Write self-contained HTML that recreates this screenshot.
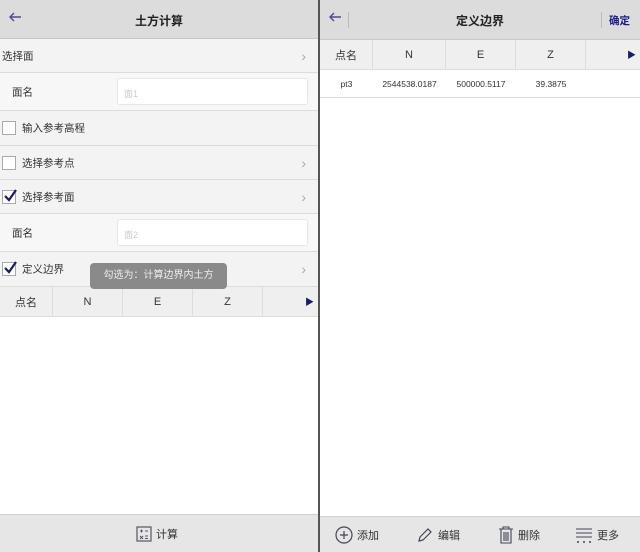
<!DOCTYPE html>
<html><head><meta charset="utf-8"><style>
*{margin:0;padding:0;box-sizing:border-box}
body{width:640px;height:552px;overflow:hidden;background:#fff;font-family:"Liberation Sans","Noto Sans CJK SC",sans-serif;font-size:11px;color:#333;position:relative}
.p{position:absolute;top:0;height:552px}
.L{left:0;width:318px;background:#fff}
.R{left:320px;width:320px;background:#fff}
.div{position:absolute;left:318px;top:0;width:2px;height:552px;background:#555}
.hd{position:absolute;left:0;right:0;top:0;height:39px;background:#dcdcdc;border-bottom:1px solid #c8c8c8}
.hd .t{position:absolute;left:0;right:0;top:12px;text-align:center;font-size:12px;font-weight:bold;color:#222}
.hd .b{position:absolute;left:8px;top:12px}
.row{position:absolute;left:0;right:0;background:#f3f3f3;border-bottom:1px solid #dcdcdc}
.row .tx{position:absolute;left:22px;top:50%;transform:translateY(-50%);font-size:10.5px}
.row .ar{position:absolute;right:12px;top:50%;transform:translateY(-50%);color:#aaa;font-size:14px}
.cb{position:absolute;left:2px;top:50%;transform:translateY(-50%);width:14px;height:14px;border:1px solid #aaa;background:#fff}
.in{position:absolute;left:117px;right:10px;top:5px;bottom:5px;background:#fff;border:1px solid #e6e6e6;border-radius:3px;color:#ccc;font-size:9px;padding:8px 6px}
.th{position:absolute;background:#efefef;height:30px;border-bottom:1px solid #ddd}
.th span,.tr span{position:absolute;top:0;height:100%;text-align:center;display:flex;align-items:center;justify-content:center;border-right:1px solid #ddd}
.ft{position:absolute;left:0;right:0;bottom:0;background:#e6e6e6;border-top:1px solid #d0d0d0}
.ft .it{position:absolute;top:0;height:100%;display:flex;align-items:center;gap:4px;font-size:11px}
</style></head><body>
<svg width="0" height="0" style="position:absolute"><defs>
<symbol id="back" viewBox="0 0 14 10"><path d="M13 5H2M6 1L2 5l4 4" fill="none" stroke="#4a4a9a" stroke-width="1.4"/></symbol>
<symbol id="chk" viewBox="0 0 14 14"><path d="M2 7l4 4 7-10" fill="none" stroke="#1a1a6a" stroke-width="2.2"/></symbol>
</defs></svg>
<div class="p L">
 <div class="hd"><svg class="b" width="14" height="10"><use href="#back"/></svg><div class="t">土方计算</div></div>
 <div class="row" style="top:39px;height:34px"><span class="tx" style="left:2px">选择面</span><span class="ar">›</span></div>
 <div class="row" style="top:73px;height:38px;background:#f7f7f7"><span class="tx" style="left:12px">面名</span><div class="in">面1</div></div>
 <div class="row" style="top:111px;height:35px"><div class="cb"></div><span class="tx">输入参考高程</span></div>
 <div class="row" style="top:146px;height:34px"><div class="cb"></div><span class="tx">选择参考点</span><span class="ar">›</span></div>
 <div class="row" style="top:180px;height:34px"><div class="cb"><svg width="14" height="14" style="position:absolute;left:0;top:-2px"><use href="#chk"/></svg></div><span class="tx">选择参考面</span><span class="ar">›</span></div>
 <div class="row" style="top:214px;height:38px;background:#f7f7f7"><span class="tx" style="left:12px">面名</span><div class="in">面2</div></div>
 <div class="row" style="top:252px;height:35px"><div class="cb"><svg width="14" height="14" style="position:absolute;left:0;top:-2px"><use href="#chk"/></svg></div><span class="tx">定义边界</span><span class="ar">›</span></div>
 <div style="position:absolute;left:90px;top:263px;width:137px;height:26px;background:#8a8a8a;border-radius:4px;color:#eee;font-size:10px;text-align:center;line-height:26px;z-index:2">勾选为：计算边界内土方</div>
 <div class="th" style="top:287px;left:0;width:318px">
  <span style="left:0;width:53px">点名</span><span style="left:53px;width:70px">N</span><span style="left:123px;width:70px">E</span><span style="left:193px;width:70px">Z</span><span style="left:263px;width:55px;justify-content:flex-end;padding-right:4px;color:#1a1a6a;border:none;font-size:9px">▶</span>
 </div>
 <div class="ft" style="height:38px">
  <div class="it" style="left:136px"><svg width="16" height="16" viewBox="0 0 16 16"><rect x="1" y="1" width="14" height="14" fill="none" stroke="#556" stroke-width="1.2"/><path d="M4 5h3M5.5 3.5v3M9 5h3M4 10l3 3M7 10l-3 3M9 10h3M9 12.5h3" stroke="#556" stroke-width="1"/></svg><span>计算</span></div>
 </div>
</div>
<div class="div"></div>
<div class="p R">
 <div class="hd" style="height:40px"><svg class="b" width="14" height="10"><use href="#back"/></svg><div class="t">定义边界</div><span style="position:absolute;right:10px;top:13px;color:#1a1a8a;font-size:10.5px;font-weight:bold">确定</span><span style="position:absolute;left:28px;top:12px;width:1px;height:16px;background:#bbb"></span><span style="position:absolute;right:38px;top:12px;width:1px;height:16px;background:#bbb"></span></div>
 <div class="th" style="top:40px;left:0;width:320px">
  <span style="left:0;width:53px">点名</span><span style="left:53px;width:73px">N</span><span style="left:126px;width:70px">E</span><span style="left:196px;width:70px">Z</span><span style="left:266px;width:54px;justify-content:flex-end;padding-right:4px;color:#1a1a6a;border:none;font-size:9px">▶</span>
 </div>
 <div class="tr" style="position:absolute;top:70px;left:0;width:320px;height:28px;border-bottom:1px solid #ddd;font-size:8.5px">
  <span style="left:0;width:53px;border:none">pt3</span><span style="left:53px;width:73px;border:none">2544538.0187</span><span style="left:126px;width:70px;border:none">500000.5117</span><span style="left:196px;width:70px;border:none">39.3875</span>
 </div>
 <div class="ft" style="height:36px">
  <div class="it" style="left:15px"><svg width="18" height="18" viewBox="0 0 18 18"><circle cx="9" cy="9" r="8" fill="none" stroke="#445" stroke-width="1.2"/><path d="M9 5v8M5 9h8" stroke="#445" stroke-width="1.2"/></svg><span>添加</span></div>
  <div class="it" style="left:96px"><svg width="18" height="18" viewBox="0 0 18 18"><path d="M3 15l1-4 8-8 3 3-8 8z" fill="none" stroke="#445" stroke-width="1.2"/></svg><span>编辑</span></div>
  <div class="it" style="left:178px"><svg width="16" height="18" viewBox="0 0 16 18"><path d="M1 3h14M5 3V1h6v2M3 3v14h10V3M6 6v9M8 6v9M10 6v9" fill="none" stroke="#445" stroke-width="1.1"/></svg><span>删除</span></div>
  <div class="it" style="left:255px"><svg width="18" height="18" viewBox="0 0 18 18"><path d="M1 3h16M1 7h16M1 11h16" stroke="#445" stroke-width="1.1"/><path d="M2 16h2M8 16h2M14 16h2" stroke="#445" stroke-width="1.6"/></svg><span>更多</span></div>
 </div>
</div>
</body></html>
